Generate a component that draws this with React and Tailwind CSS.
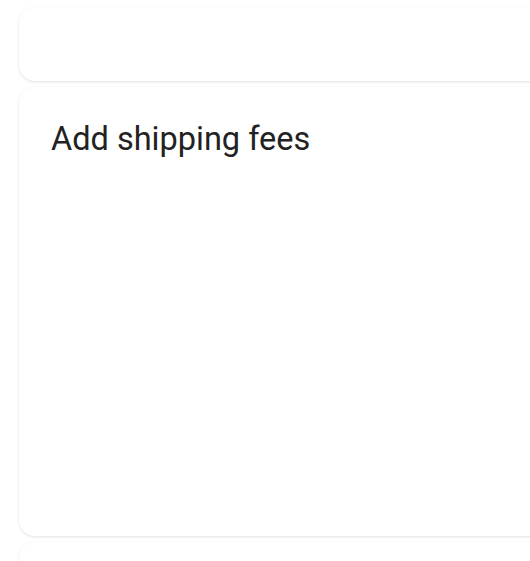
export default function App() {
  return (
    <div className="h-[561px] w-[530px] overflow-hidden bg-white" style={{ fontFamily: 'Roboto, "Noto Sans", sans-serif' }}>
      <div className="flex w-[600px] flex-col gap-[6px] pl-[19px] pt-[7px]">
        <div className="h-[74px] rounded-2xl bg-white shadow-[0_1px_3px_rgba(0,0,0,0.12)]" />
        <div className="h-[449px] rounded-2xl bg-white px-8 pt-[30px] shadow-[0_1px_3px_rgba(0,0,0,0.12)]">
          <h2 className="text-[32.5px] leading-[44px] text-[#222222]">Add shipping fees</h2>
        </div>
        <div className="h-[100px] rounded-2xl bg-white shadow-[0_1px_3px_rgba(0,0,0,0.12)]" />
      </div>
    </div>
  )
}
